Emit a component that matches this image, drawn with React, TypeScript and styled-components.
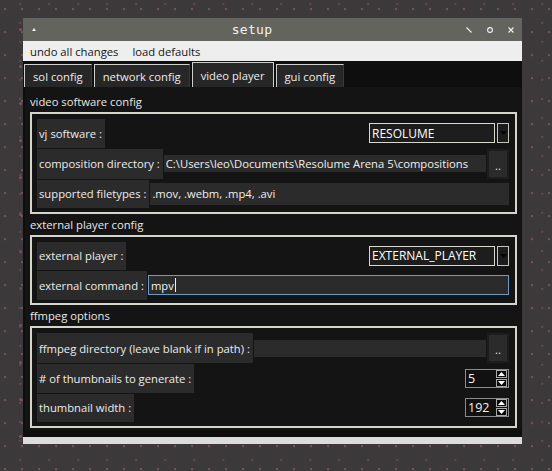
import styled, { createGlobalStyle } from "styled-components";

const GlobalStyle = createGlobalStyle`
  html, body {
    margin: 0;
    padding: 0;
    height: 100%;
  }
  body {
    background-color: #3b393a;
    background-image:
      radial-gradient(circle at 30% 40%, #74505c 0.9px, transparent 1.5px),
      radial-gradient(circle at 70% 20%, #5f4751 0.9px, transparent 1.5px),
      radial-gradient(circle at 50% 80%, #80505f 1px, transparent 1.7px);
    background-size: 17px 23px, 29px 19px, 41px 37px;
    font-family: "Open Sans", "Noto Sans", sans-serif;
    font-size: 11.25px;
  }
  #root {
    min-height: 100%;
  }
`;

const Page = styled.div`
  padding: 18px 0 0 23px;
`;

const Window = styled.div`
  width: 499px;
  display: flex;
  flex-direction: column;
  background: #0e0e0e;
`;

const TitleBar = styled.div`
  height: 23px;
  background: #64645e;
  display: flex;
  align-items: center;
  color: #f2f2f2;
`;

const TitleLeft = styled.div`
  width: 30px;
  padding-left: 9px;
  box-sizing: border-box;
  display: flex;
  align-items: center;
`;

const Title = styled.div`
  flex: 1;
  text-align: center;
  padding-right: 15px;
  font-family: "DejaVu Sans Mono", monospace;
  font-size: 13px;
  letter-spacing: 0.3px;
`;

const TitleButtons = styled.div`
  display: flex;
  gap: 15px;
  padding-right: 8px;
  align-items: center;
`;

const MenuBar = styled.div`
  height: 20px;
  background: #eeeeee;
  display: flex;
  align-items: center;
  color: #151515;
`;

const MenuItem = styled.span`
  padding: 0 7px;
`;

const TabBar = styled.div`
  height: 26px;
  display: flex;
  align-items: flex-end;
  gap: 2px;
  padding-left: 1px;
`;

const Tab = styled.div<{ $active?: boolean }>`
  height: ${(p) => (p.$active ? 25 : 23)}px;
  box-sizing: border-box;
  padding: 0 8px 0 8px;
  display: flex;
  align-items: center;
  background: #272727;
  color: #ececec;
  border-top: 1px solid #cfcfcf;
  border-left: 1px solid #cfcfcf;
  border-right: 1px solid ${(p) => (p.$active ? "#cfcfcf" : "#3a3a3a")};
`;

const Panel = styled.div`
  margin: 0 1px 0 2px;
  background: #141414;
  padding: 4px 4px 2px 5px;
`;

const SectionLabel = styled.div`
  height: 21px;
  line-height: 21px;
  color: #e8e8e8;
`;

const Group = styled.div`
  border: 2px solid #d5d5cd;
  padding: 5px 6px 3.5px 5px;
  display: flex;
  flex-direction: column;
  gap: 1px;
`;

const Row = styled.div`
  display: flex;
  align-items: center;
  min-height: 28.5px;
`;

const LabelCell = styled.div`
  align-self: stretch;
  display: flex;
  align-items: center;
  padding: 0 3px 0 2px;
  background: #2b2b2b;
  color: #ececec;
  white-space: nowrap;
`;

const Entry = styled.div<{ $h: number; $focus?: boolean }>`
  flex: 1;
  height: ${(p) => p.$h}px;
  box-sizing: border-box;
  margin-left: 1px;
  padding-left: 2px;
  display: flex;
  align-items: center;
  background: #2b2b2b;
  color: #f0f0f0;
  white-space: nowrap;
  overflow: hidden;
  border: ${(p) => (p.$focus ? "1px solid #6d9bc8" : "none")};
`;

const Caret = styled.span`
  display: inline-block;
  width: 1px;
  height: 14px;
  margin-left: 1px;
  background: #f0f0f0;
`;

const DotsButton = styled.div`
  width: 22px;
  height: 30px;
  box-sizing: border-box;
  margin-left: 1px;
  border: 2px solid #1d1d1d;
  background: #2b2b2b;
  color: #e8e8e8;
  display: flex;
  align-items: center;
  justify-content: center;
  padding-top: 3px;
`;

const Combo = styled.div`
  margin-left: auto;
  display: flex;
  gap: 2px;
`;

const ComboField = styled.div`
  width: 126px;
  height: 20px;
  box-sizing: border-box;
  border: 1px solid #d8d8d0;
  background: #1d1d1d;
  color: #ffffff;
  padding-left: 2px;
  display: flex;
  align-items: center;
  font-size: 12px;
`;

const ComboArrow = styled.div`
  width: 12px;
  height: 20px;
  box-sizing: border-box;
  border: 1px solid #c4c4bc;
  background: #1c1c1c;
  display: flex;
  align-items: center;
  justify-content: center;
`;

const SpinBox = styled.div`
  margin-left: auto;
  width: 44px;
  height: 19px;
  box-sizing: border-box;
  border: 1px solid #8c8c8c;
  background: #111111;
  display: flex;
  align-items: center;
`;

const SpinValue = styled.div`
  flex: 1;
  padding-left: 2px;
  color: #f4f4f4;
  font-size: 12.5px;
`;

const SpinArrows = styled.div`
  display: flex;
  flex-direction: column;
  gap: 1px;
  margin-right: 1px;
`;

const SpinArrow = styled.div`
  width: 11px;
  height: 8px;
  box-sizing: border-box;
  border: 1px solid #a8a8a8;
  background: #0b0b0b;
  display: flex;
  align-items: center;
  justify-content: center;
`;

const BottomGap = styled.div`
  height: 7px;
`;

const BottomStrip = styled.div`
  height: 7px;
  background: #dcdcdc;
`;

function TriDown({ color }: { color: string }) {
  return (
    <svg width="7" height="4" viewBox="0 0 7 4">
      <path d="M0 0 H7 L3.5 4 Z" fill={color} />
    </svg>
  );
}

function TriUp({ color }: { color: string }) {
  return (
    <svg width="7" height="4" viewBox="0 0 7 4">
      <path d="M0 4 H7 L3.5 0 Z" fill={color} />
    </svg>
  );
}

function ComboBox({ value }: { value: string }) {
  return (
    <Combo>
      <ComboField>{value}</ComboField>
      <ComboArrow>
        <TriDown color="#050505" />
      </ComboArrow>
    </Combo>
  );
}

function Spin({ value }: { value: string }) {
  return (
    <SpinBox>
      <SpinValue>{value}</SpinValue>
      <SpinArrows>
        <SpinArrow>
          <TriUp color="#ffffff" />
        </SpinArrow>
        <SpinArrow>
          <TriDown color="#ffffff" />
        </SpinArrow>
      </SpinArrows>
    </SpinBox>
  );
}

export default function App() {
  return (
    <>
      <GlobalStyle />
      <Page>
        <Window>
          <TitleBar>
            <TitleLeft>
              <svg width="4" height="3" viewBox="0 0 4 3">
                <path d="M0 3 H4 L2 0 Z" fill="#f2f2f2" />
              </svg>
            </TitleLeft>
            <Title>setup</Title>
            <TitleButtons>
              <svg width="6" height="6" viewBox="0 0 6 6">
                <path d="M0.5 0.5 L5.5 5.5" stroke="#f2f2f2" strokeWidth="1.1" />
              </svg>
              <svg width="6" height="6" viewBox="0 0 6 6">
                <circle cx="3" cy="3" r="2.4" fill="none" stroke="#f2f2f2" strokeWidth="1.1" />
              </svg>
              <svg width="6" height="6" viewBox="0 0 6 6">
                <path d="M0.5 0.5 L5.5 5.5 M5.5 0.5 L0.5 5.5" stroke="#f2f2f2" strokeWidth="1.1" />
              </svg>
            </TitleButtons>
          </TitleBar>
          <MenuBar>
            <MenuItem>undo all changes</MenuItem>
            <MenuItem>load defaults</MenuItem>
          </MenuBar>
          <TabBar>
            <Tab>sol config</Tab>
            <Tab>network config</Tab>
            <Tab $active>video player</Tab>
            <Tab>gui config</Tab>
          </TabBar>
          <Panel>
            <SectionLabel>video software config</SectionLabel>
            <Group>
              <Row>
                <LabelCell>vj software :</LabelCell>
                <ComboBox value="RESOLUME" />
              </Row>
              <Row>
                <LabelCell>composition directory :</LabelCell>
                <Entry $h={17}>C:\Users\leo\Documents\Resolume Arena 5\compositions</Entry>
                <DotsButton>..</DotsButton>
              </Row>
              <Row>
                <LabelCell>supported filetypes :</LabelCell>
                <Entry $h={22}>.mov, .webm, .mp4, .avi</Entry>
              </Row>
            </Group>
            <SectionLabel>external player config</SectionLabel>
            <Group>
              <Row>
                <LabelCell>external player :</LabelCell>
                <ComboBox value="EXTERNAL_PLAYER" />
              </Row>
              <Row>
                <LabelCell>external command :</LabelCell>
                <Entry $h={20} $focus>
                  mpv
                  <Caret />
                </Entry>
              </Row>
            </Group>
            <SectionLabel>ffmpeg options</SectionLabel>
            <Group>
              <Row>
                <LabelCell>ffmpeg directory (leave blank if in path) :</LabelCell>
                <Entry $h={17} />
                <DotsButton>..</DotsButton>
              </Row>
              <Row>
                <LabelCell># of thumbnails to generate :</LabelCell>
                <Spin value="5" />
              </Row>
              <Row>
                <LabelCell>thumbnail width :</LabelCell>
                <Spin value="192" />
              </Row>
            </Group>
          </Panel>
          <BottomGap />
          <BottomStrip />
        </Window>
      </Page>
    </>
  );
}
